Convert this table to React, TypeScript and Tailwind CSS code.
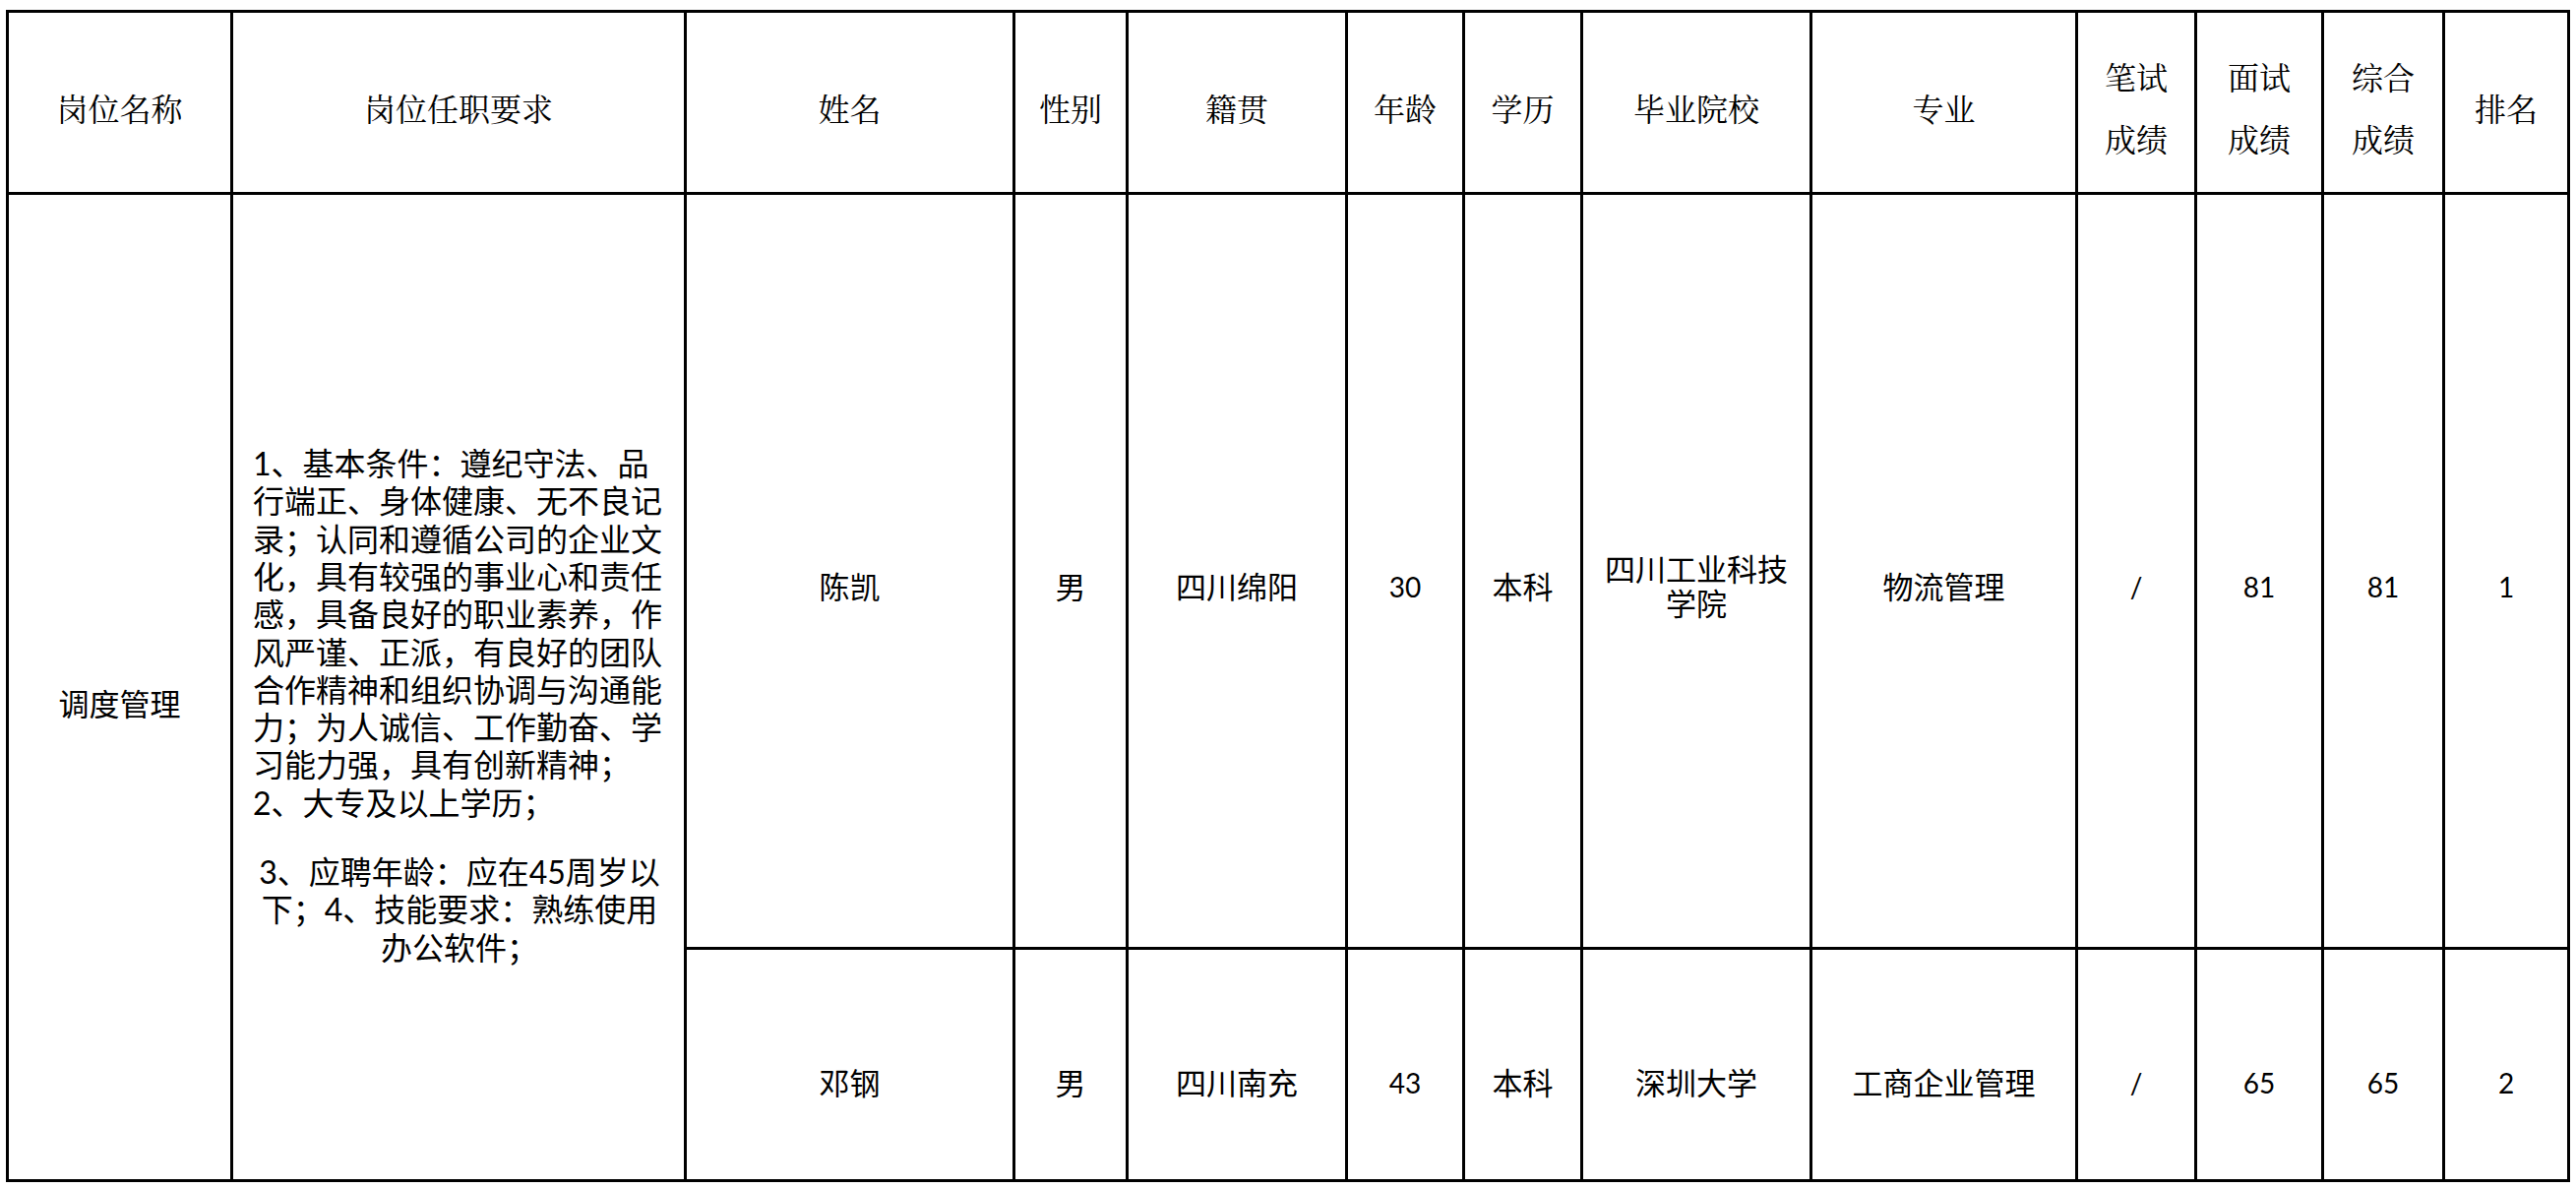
import React from "react";

const headerFont = "font-['Noto_Serif_CJK_SC','Noto_Sans_CJK_SC',serif]";

type Row = string[];

const rows: Row[] = [
  ["陈凯", "男", "四川绵阳", "30", "本科", "四川工业科技学院", "物流管理", "/", "81", "81", "1"],
  ["邓钢", "男", "四川南充", "43", "本科", "深圳大学", "工商企业管理", "/", "65", "65", "2"],
];

const isNum = (s: string) => /^[0-9/]+$/.test(s);

function HeaderCell({ children }: { children: React.ReactNode }) {
  return (
    <div className={`flex items-center justify-center bg-white pt-[10px] text-center text-[32px] leading-[63px] text-black ${headerFont}`}>
      <div>{children}</div>
    </div>
  );
}

function BodyCell({ text, pad }: { text: string; pad: string }) {
  return (
    <div className={`flex items-center justify-center bg-white px-[20px] text-center text-black ${pad}`}>
      <div className={isNum(text) ? "text-[28px] leading-[35px]" : "text-[31px] leading-[35px]"}>{text}</div>
    </div>
  );
}

export default function App() {
  return (
    <div className="min-h-screen bg-white pl-[6px] pt-[10px] font-['Lato','Noto_Sans_CJK_SC',sans-serif] text-black">
      <div className="grid w-max grid-cols-[225px_458px_331px_112px_220px_116px_117px_230px_267px_118px_126px_120px_124px] grid-rows-[182px_764px_233px] gap-[3px] bg-black p-[3px]">
        <HeaderCell>岗位名称</HeaderCell>
        <HeaderCell>岗位任职要求</HeaderCell>
        <HeaderCell>姓名</HeaderCell>
        <HeaderCell>性别</HeaderCell>
        <HeaderCell>籍贯</HeaderCell>
        <HeaderCell>年龄</HeaderCell>
        <HeaderCell>学历</HeaderCell>
        <HeaderCell>毕业院校</HeaderCell>
        <HeaderCell>专业</HeaderCell>
        <HeaderCell>
          笔试
          <br />
          成绩
        </HeaderCell>
        <HeaderCell>
          面试
          <br />
          成绩
        </HeaderCell>
        <HeaderCell>
          综合
          <br />
          成绩
        </HeaderCell>
        <HeaderCell>排名</HeaderCell>

        <div className="row-span-2 flex items-center justify-center bg-white pt-[34px] text-center text-[31px] leading-[35px]">
          调度管理
        </div>
        <div className="row-span-2 flex flex-col justify-center bg-white pl-[20px] pr-[18px] pt-[38px] text-left text-[32px] leading-[38.3px]">
          <p className="w-[420px]">
            1、基本条件：遵纪守法、品行端正、身体健康、无不良记录；认同和遵循公司的企业文化，具有较强的事业心和责任感，具备良好的职业素养，作风严谨、正派，有良好的团队合作精神和组织协调与沟通能力；为人诚信、工作勤奋、学习能力强，具有创新精神；
          </p>
          <p className="w-[420px]">2、大专及以上学历；</p>
          <div className="h-[32px]" />
          <p className="w-[420px] text-center">
            3、应聘年龄：应在45周岁以下；4、技能要求：熟练使用办公软件；
          </p>
        </div>
        {rows[0].map((t, i) => (
          <BodyCell key={`a${i}`} text={t} pad="pt-[32px]" />
        ))}
        {rows[1].map((t, i) => (
          <BodyCell key={`b${i}`} text={t} pad="pt-[38px]" />
        ))}
      </div>
    </div>
  );
}
